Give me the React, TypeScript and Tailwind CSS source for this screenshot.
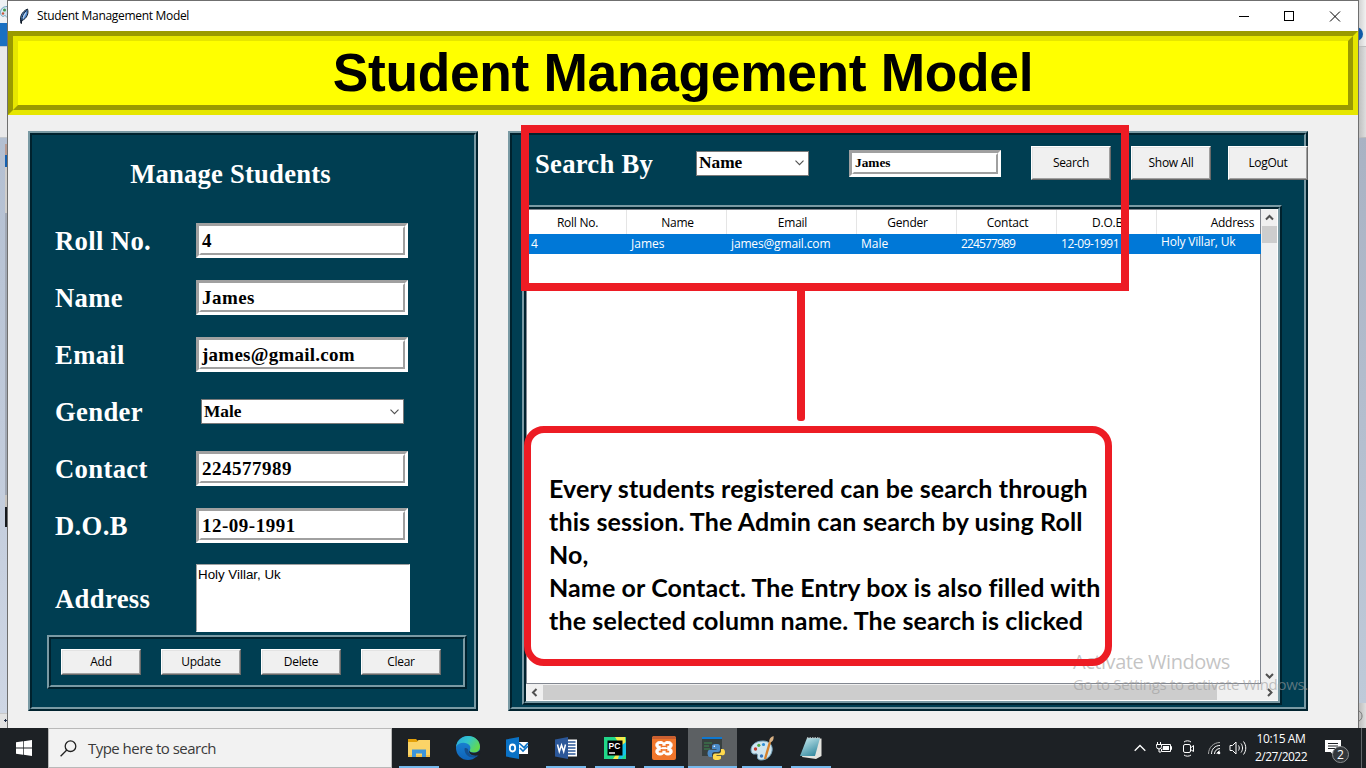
import type { ReactNode } from "react";

const UI = "font-['Open_Sans','Noto_Sans',sans-serif]";
const SERIF = "font-['Liberation_Serif',serif] font-bold";

function Groove({ className, children, inner }: { className: string; inner?: string; children: ReactNode }) {
  return (
    <div className={`shrink-0 border-2 border-t-[#7a9aa4] border-l-[#7a9aa4] border-r-[#00222e] border-b-[#00222e] bg-[#003e52] ${className}`}>
      <div className={`h-full border-2 border-t-[#00222e] border-l-[#00222e] border-r-[#7a9aa4] border-b-[#7a9aa4] ${inner ?? ""}`}>{children}</div>
    </div>
  );
}

function Entry({ className, children }: { className: string; children: ReactNode }) {
  return (
    <div className={`shrink-0 border-3 border-t-[#a0a0a0] border-l-[#a0a0a0] border-r-white border-b-white bg-white ${className}`}>
      <div className="flex h-full items-center border-2 border-t-white border-l-white border-r-[#a0a0a0] border-b-[#a0a0a0] pl-[1px] whitespace-nowrap">{children}</div>
    </div>
  );
}

function Combo({ className, children }: { className: string; children: ReactNode }) {
  return (
    <div className={`flex h-[25px] shrink-0 items-center justify-between border border-[#7a7a7a] bg-white pr-[4px] pl-[2px] text-[17.33px] leading-none text-black ${SERIF} ${className}`}>
      <span>{children}</span>
      <svg width="9" height="6" viewBox="0 0 9 6" fill="none" stroke="#505050" strokeWidth="1.1"><path d="M.5 .7 4.5 4.7 8.5 .7" /></svg>
    </div>
  );
}

function Btn({ className, children }: { className: string; children: ReactNode }) {
  return (
    <button className={`flex w-20 shrink-0 items-center justify-center border border-t-white border-l-white border-r-[#696969] border-b-[#696969] p-0 text-xs tracking-[-0.3px] text-black ${UI} ${className}`}>
      <span className="flex h-full w-full items-center justify-center border border-t-[#e3e3e3] border-l-[#e3e3e3] border-r-[#a0a0a0] border-b-[#a0a0a0] bg-[#f0f0f0]">{children}</span>
    </button>
  );
}

function FormRow({ label, className, children }: { label: string; className?: string; children: ReactNode }) {
  return (
    <div className={`flex items-center ${className ?? "h-[35px]"}`}>
      <span className={`w-[141px] shrink-0 pt-[2px] text-[26.67px] leading-none tracking-[0.35px] whitespace-nowrap text-white ${SERIF}`}>{label}</span>
      {children}
    </div>
  );
}

const entryText = `text-[19px] leading-none text-black ${SERIF}`;

function ManagePanel() {
  return (
    <Groove className="h-[580px] w-[450px]">
      <h2 className={`flex h-[88px] items-center justify-center pr-[45px] pb-[11px] text-[26.67px] tracking-[0.2px] text-white ${SERIF}`}>Manage Students</h2>
      <div className="flex flex-col gap-[22px] pl-[23px]">
        <FormRow label="Roll No."><Entry className={`h-[35px] w-[212px] ${entryText}`}>4</Entry></FormRow>
        <FormRow label="Name"><Entry className={`h-[35px] w-[212px] tracking-[0.45px] ${entryText}`}>James</Entry></FormRow>
        <FormRow label="Email"><Entry className={`h-[35px] w-[212px] tracking-[0.25px] ${entryText}`}>james@gmail.com</Entry></FormRow>
        <FormRow label="Gender"><Combo className="ml-[5px] w-[203px]">Male</Combo></FormRow>
        <FormRow label="Contact"><Entry className={`h-[35px] w-[212px] tracking-[0.5px] ${entryText}`}>224577989</Entry></FormRow>
        <FormRow label="D.O.B"><Entry className={`h-[35px] w-[212px] tracking-[0.5px] ${entryText}`}>12-09-1991</Entry></FormRow>
        <FormRow label="Address" className="-mt-px h-[68px]">
          <div className="h-[68px] w-[214px] border border-t-[#a0a0a0] border-l-[#a0a0a0] border-r-white border-b-white bg-white pt-[2px] pl-px font-['Liberation_Sans',sans-serif] text-[13.33px] leading-[16px] text-black">Holy Villar, Uk</div>
        </FormRow>
      </div>
      <Groove className="mt-[3px] ml-[15px] h-[54px] w-[420px]" inner="flex gap-5 pl-[10px] pt-[10px]">
        <Btn className="h-[26px]">Add</Btn>
        <Btn className="h-[26px]">Update</Btn>
        <Btn className="h-[26px]">Delete</Btn>
        <Btn className="h-[26px]">Clear</Btn>
      </Groove>
    </Groove>
  );
}

const columns = [
  { head: "Roll No.", cell: "4", w: "w-[100px]", t: "" },
  { head: "Name", cell: "James", w: "w-[100px]", t: "" },
  { head: "Email", cell: "james@gmail.com", w: "w-[130px]", t: "tracking-[-0.15px]" },
  { head: "Gender", cell: "Male", w: "w-[100px]", t: "" },
  { head: "Contact", cell: "224577989", w: "w-[100px]", t: "tracking-[-0.85px]" },
  { head: "D.O.B", cell: "12-09-1991", w: "w-[100px]", t: "tracking-[-0.45px]" },
  { head: "Address", cell: "Holy Villar, Uk", w: "w-[150px]", t: "tracking-[-0.2px] -translate-y-[2px]" },
];

function Arrow({ d }: { d: string }) {
  return <svg width="9" height="9" viewBox="0 0 9 9" fill="none" stroke="#505050" strokeWidth="2"><path d={d} /></svg>;
}

function StudentTable() {
  return (
    <Groove className="ml-[10px] h-[500px] w-[760px]" inner="flex flex-col bg-[#f0f0f0]">
      <div className="flex h-[475px]">
        <div className="h-[475px] w-[735px] shrink-0 border border-[#828790] bg-white">
          <div className="flex h-6 overflow-hidden">
            {columns.map((c) => (
              <div key={c.head} className={`flex shrink-0 items-center justify-center border-r border-[#e5e5e5] pt-px pl-[2px] text-xs tracking-[-0.25px] text-black ${UI} ${c.w}`}>{c.head}</div>
            ))}
          </div>
          <div className="mr-[-1px] flex h-5 overflow-hidden bg-[#0078d7]">
            {columns.map((c) => (
              <div key={c.head} className={`flex shrink-0 items-center pl-[4px] text-xs whitespace-nowrap text-white ${UI} ${c.w} ${c.t}`}>{c.cell}</div>
            ))}
          </div>
        </div>
        <div className="ml-px flex w-4 flex-col items-center justify-between border-r border-white bg-[#f0f0f0]">
          <div className="flex w-full flex-col items-center">
            <div className="flex h-[17px] items-center"><Arrow d="M1 6.5 4.5 3 8 6.5" /></div>
            <div className="h-[17px] w-full bg-[#cdcdcd]" />
          </div>
          <div className="flex h-[17px] items-center"><Arrow d="M1 3 4.5 6.5 8 3" /></div>
        </div>
      </div>
      <div className="mt-px flex h-4 items-center border-b border-white bg-[#f0f0f0]">
        <div className="flex w-[17px] justify-center"><Arrow d="M6.5 1 3 4.5 6.5 8" /></div>
        <div className="h-full w-[675px] bg-[#cdcdcd]" />
        <div className="ml-[44px] flex w-[17px] justify-center"><Arrow d="M3 1 6.5 4.5 3 8" /></div>
      </div>
    </Groove>
  );
}

function SearchPanel() {
  return (
    <Groove className="h-[580px] w-[800px]">
      <div className="mb-[14px] flex h-14 items-center pl-[23px]">
        <span className={`w-[161px] shrink-0 pt-[2px] text-[26.67px] leading-none tracking-[0.25px] text-white ${SERIF}`}>Search By</span>
        <Combo className="w-[113px]">Name</Combo>
        <Entry className={`ml-10 h-[27px] w-[152px] text-[13.33px] leading-none text-black ${SERIF}`}>James</Entry>
        <Btn className="ml-[30px] h-[34px]">Search</Btn>
        <Btn className="ml-5 h-[34px]">Show All</Btn>
        <Btn className="ml-[17px] h-[34px]">LogOut</Btn>
      </div>
      <StudentTable />
    </Groove>
  );
}

function TitleBar() {
  return (
    <header className="flex h-[31px] items-center border-t border-[#6f6f6f] bg-white">
      <svg className="ml-[10px]" width="12" height="17" viewBox="0 0 12 17">
        <path d="M3 15C1.500 10 3 4 9.500 1c1.500 4-.5 9.500-5.500 11.500z" fill="#4d86cc" stroke="#15202e" strokeWidth="1" />
        <path d="M8.500 2.500C5 6 4 9 3.200 16" fill="none" stroke="#0b1420" strokeWidth="1" />
        <path d="M8 4.500C6 6.500 5.600 8 5 10.500" fill="none" stroke="#b7d4f2" strokeWidth="1.200" />
      </svg>
      <span className={`ml-[7px] text-xs tracking-[-0.31px] whitespace-nowrap text-black ${UI}`}>Student Management Model</span>
      <svg className="ml-auto mr-[17px]" width="102" height="11" viewBox="0 0 102 11" fill="none" stroke="#000" shapeRendering="crispEdges">
        <path d="M0 5.500h10M45.500 .5h9v9h-9z" />
        <path d="M91 .5l10 10M101 .5l-10 10" shapeRendering="auto" />
      </svg>
    </header>
  );
}

function Banner() {
  return (
    <div className="h-[84px] border-5 border-t-[#9a9a00] border-l-[#9a9a00] border-r-[#e6e600] border-b-[#e6e600]">
      <h1 className="flex h-full items-center justify-center border-5 border-t-[#e6e600] border-l-[#e6e600] border-r-[#9a9a00] border-b-[#9a9a00] bg-[#ffff00] font-['Liberation_Sans',sans-serif] text-[53.33px] leading-none font-bold tracking-[-0.32px] text-black">Student Management Model</h1>
    </div>
  );
}

function LeftEdge() {
  return (
    <div className="flex w-[7px] shrink-0 flex-col overflow-hidden">
      <div className="flex h-[23px] items-center bg-[#eef1f4]">
        <svg width="7" height="14" viewBox="0 0 7 14"><path d="M7 1.500C3 1.500.5 4 .5 7.500S3 12 4 11s2 0 3 1.500" fill="#d5e6ee" stroke="#6ba3bd" /><circle cx="4.500" cy="5" r="1.500" fill="#3f9a4b" /><circle cx="3" cy="8.500" r="1.200" fill="#c9543c" /></svg>
      </div>
      <div className="h-[23px] bg-[#1a70c2]" />
      <div className="h-[92px] border-t border-b border-[#c4c8cc] bg-[#e9e9ea]" />
      <div className="flex h-[575px] flex-col items-end bg-linear-to-b from-[#b3bfd1] to-[#ced6e4]">
        <div className="mt-[6px] h-[11px] w-[2px] bg-[#b89a90]" />
        <div className="h-[12px] w-[2px] bg-[#1460b0]" />
        <div className="h-[46px] w-[2px] bg-[#cfcdca]" />
        <div className="h-[282px] w-[2px] bg-[#a2a9b5]" />
        <div className="h-[12px] w-[2px] bg-[#c9c5c0]" />
        <div className="h-[20px] w-[2px] bg-[#16191d]" />
      </div>
      <div className="flex flex-1 items-center border-t border-[#c8c8c8] bg-[#e2e2e2] pb-[2px]">
        <svg width="7" height="5" viewBox="0 0 7 5" stroke="#1d2b45" fill="none"><path d="M4 2.500h3M5.500 1v3" /></svg>
      </div>
    </div>
  );
}

function RightEdge() {
  return (
    <div className="flex w-[7px] shrink-0 flex-col overflow-hidden">
      <div className="h-[46px] bg-linear-to-r from-[#d2d2d2] to-[#f1f1f1] pt-[27px]">
        <div className="-ml-[10px] h-[14px] w-[14px] rounded-full bg-[#0f5ba8]" />
      </div>
      <div className="h-[92px] border-t border-b border-[#bdbdbd] bg-linear-to-r from-[#c0c0c0] to-[#dedede]" />
      <div className="h-[565px] bg-linear-to-b from-[#a9b2c3] to-[#bfcad9]" />
      <div className="flex flex-1 items-center bg-linear-to-r from-[#bdbdbd] to-[#dedede]">
        <svg width="7" height="14" viewBox="0 0 7 14" fill="none" stroke="#777"><path d="M0 2c4 2 4 8 0 10" /></svg>
      </div>
    </div>
  );
}

const FileExplorer = () => (
  <svg width="24" height="24" viewBox="0 0 24 24"><path d="M1 3h8l2 2v3H1z" fill="#e3a008" /><path d="M1 6h9l1.500-2H23v17H1z" fill="#fbd467" /><path d="M1 19h22v2H1z" fill="#f2c04a" /><path d="M5 13.500h14V21h-4v-3.500H9V21H5z" fill="#3d95da" /></svg>
);
const Edge = () => (
  <svg width="26" height="26" viewBox="0 0 26 26">
    <defs>
      <linearGradient id="eg" x1="0" y1="0" x2="1" y2=".5"><stop offset="0" stopColor="#2ba6dc" /><stop offset=".5" stopColor="#32c5cd" /><stop offset="1" stopColor="#62d94f" /></linearGradient>
      <linearGradient id="eb" x1="0" y1="0" x2="0" y2="1"><stop offset="0" stopColor="#1c8ad8" /><stop offset="1" stopColor="#0f63b8" /></linearGradient>
    </defs>
    <circle cx="13" cy="13" r="12" fill="url(#eb)" />
    <path d="M1 12C2 5 7 1 13 1c7 0 12 5 12 10.500 0 4-3 6-6 6-3.500 0-4.700-1.500-4.200-2.500 1.200-2 .7-5-2.800-6.500C8 7 3 8 1 12z" fill="url(#eg)" />
    <path d="M9.500 14c0 5 4 8.500 9 8.500 2.500 0 4.500-1.300 5-2.500-2 1-4 1.300-6 .7-3-1-4.500-3-4.200-5.700C13 13 9.500 12 9.500 14z" fill="#14508f" />
    <path d="M14.600 15c-.5 1.500 1 2.700 4.400 2.700 2.700 0 4.500-1 5.700-2.500l.8 2.500-2 2.500c-5 1.500-11-1-8.900-5.200z" fill="#1d2125" />
  </svg>
);
const Outlook = () => (
  <svg width="24" height="24" viewBox="0 0 24 24"><path d="M14 6h9v12h-9z" fill="#fff" /><path d="M14 7l5 4.500L23 7M15 12l3 3 5-5" fill="none" stroke="#0a72c6" strokeWidth="1.600" /><path d="M1 3.500 14 1v22L1 20.500z" fill="#0a72c6" /><ellipse cx="7.500" cy="12" rx="2.700" ry="3.500" fill="none" stroke="#fff" strokeWidth="1.800" /></svg>
);
const Word = () => (
  <svg width="24" height="24" viewBox="0 0 24 24"><path d="M13 3.500h10v17H13z" fill="#fff" /><path d="M14 6h7.500M14 9h7.500M14 12h7.500M14 15h7.500M14 18h7.500" stroke="#2b5797" strokeWidth="1.300" /><path d="M1 3.500 14 1v22L1 20.500z" fill="#2b5799" /><path d="m3.500 8.500 1.800 7L7.500 9l2.200 6.500 1.800-7" fill="none" stroke="#fff" strokeWidth="1.500" /></svg>
);
const PyCharm = () => (
  <svg width="24" height="24" viewBox="0 0 24 24"><path d="M1 1h22v22H1z" fill="#21d789" /><path d="M12 1h10l1 10-5 12H10l8-12z" fill="#f3ec4b" /><path d="M19 9l4-3v12l-5 5h-3z" fill="#16c3e6" /><path d="M4.500 4.500h15v15h-15z" fill="#000" /><text x="5.500" y="12.500" fill="#fff" fontSize="8.500" fontWeight="700" fontFamily="Liberation Sans, sans-serif">PC</text><path d="M6 17h6" stroke="#fff" strokeWidth="1.400" /></svg>
);
const Xampp = () => (
  <svg width="26" height="26" viewBox="0 0 26 26">
    <rect x="1" y="1" width="24" height="24" rx="2" fill="#f0762b" />
    <path d="M1 4a3 3 0 0 1 3-3h18a3 3 0 0 1 3 3H1z" fill="#c95f31" />
    <path d="M13 8.300C12 5.800 4.800 5.500 4.800 9.800c0 2 .8 2.700 1.600 3.400-.8.700-1.600 1.500-1.600 3.500 0 4.300 7.200 4 8.200 1.500 1 2.500 8.200 2.800 8.200-1.500 0-2-.8-2.800-1.600-3.500.8-.7 1.600-1.400 1.600-3.400C21.200 5.500 14 5.800 13 8.300z" fill="#fff" stroke="#fff" strokeWidth="1" />
    <path d="M7.800 9.800h2.700v1.800h5v-1.800h2.700M7.800 16.700h2.700v-1.900h5v1.900h2.700" fill="none" stroke="#f0762b" strokeWidth="1.700" />
    <path d="M11 13.200h4" stroke="#fff" strokeWidth="2" />
  </svg>
);
const Python = () => (
  <svg width="26" height="26" viewBox="0 0 26 26"><path d="M2 2h20v19H2z" fill="#38403f" /><path d="M2 2h20v2H2z" fill="#0f78d1" /><path d="M4 8h8M4 11h5M4 14h6" stroke="#3c8a50" strokeWidth="1.200" /><path d="M16 9c-3.500 0-4 1-4 2.500V14h4.500v.8H10c-2 0-2.500 2-2.500 3.700S8.500 22 10 22h2v-2.500c0-1.500 1-2.500 2.500-2.500H18c1.300 0 2-1 2-2v-3.500C20 9.500 19 9 16 9z" fill="#4b8bc8" /><path d="M17 25c3.500 0 4-1 4-2.500V21h-4.500v-.8H23c1.500 0 2-1.500 2-3s-.8-3.200-2-3.200h-2v2c0 1.500-1 2.500-2.500 2.500H15c-1.300 0-2 1-2 2v2.500c0 1.500 1 2 4 2z" fill="#ffd94c" /><circle cx="14.300" cy="11.300" r=".8" fill="#fff" /></svg>
);
const Paint = () => (
  <svg width="26" height="26" viewBox="0 0 26 26"><path d="M14 6C6 6 2 10.500 2 15c0 3 2 4.500 4 4s3 .5 2.500 2.500C8 24 10 25 12 25c6 0 10-4 11-9S21 6 14 6z" fill="#cfe5f0" stroke="#76a4bd" /><circle cx="6.500" cy="14" r="1.700" fill="#c0392b" /><circle cx="9.800" cy="10.300" r="1.600" fill="#4dab46" /><circle cx="14.500" cy="9.500" r="1.600" fill="#2f8fd6" /><circle cx="12.500" cy="21" r="1.700" fill="#3575c1" /><path d="M16 24 21 7" stroke="#d5822d" strokeWidth="2.400" /><path d="M20.500 7.500c-1-3 1-5.500 4-6.500.5 3-.5 6-4 6.500z" fill="#d9b184" /></svg>
);
const Notepad = () => (
  <svg width="24" height="24" viewBox="0 0 24 24"><defs><linearGradient id="np" x1="0" y1="0" x2=".6" y2="1"><stop offset="0" stopColor="#cfeff3" /><stop offset="1" stopColor="#3b8ea3" /></linearGradient></defs><path d="M9 3 22.500 2.500V20L17 23 3 21z" fill="#e4e4df" /><path d="M8 2h13l-5 18H1z" fill="url(#np)" /><path d="M8 2h13" stroke="#b9c7ca" strokeWidth="1.500" strokeDasharray="1.500 1" /></svg>
);

const apps = [
  { Icon: FileExplorer, name: "files", open: true, active: false },
  { Icon: Edge, name: "edge", open: false, active: false },
  { Icon: Outlook, name: "outlook", open: false, active: false },
  { Icon: Word, name: "word", open: true, active: false },
  { Icon: PyCharm, name: "pycharm", open: true, active: false },
  { Icon: Xampp, name: "xampp", open: true, active: false },
  { Icon: Python, name: "python", open: true, active: true },
  { Icon: Paint, name: "paint", open: true, active: false },
  { Icon: Notepad, name: "notepad", open: true, active: false },
];

function Taskbar() {
  return (
    <footer className={`flex h-10 bg-[#1d2125] text-white ${UI}`}>
      <div className="flex w-12 items-center justify-center">
        <svg width="16" height="16" viewBox="0 0 16 16" fill="#fff"><path d="M0 2.300 7 1.300V7.600H0zM7.700 1.200 16 0v7.600H7.700zM0 8.400h7v6.300L0 13.700zM7.700 8.400H16V16l-8.300-1.200z" /></svg>
      </div>
      <div className="flex w-[344px] items-center border border-[#b9b9b9] bg-[#f2f2f2]">
        <svg className="ml-[11px]" width="17" height="17" viewBox="0 0 17 17" fill="none" stroke="#222" strokeWidth="1.300"><circle cx="10.500" cy="6.200" r="5.300" /><path d="M6.800 10 .6 16.300" /></svg>
        <span className="ml-[11px] text-[15px] leading-none tracking-[-0.53px] text-[#3a3a3a]">Type here to search</span>
      </div>
      <div className="ml-[2px] flex">
        {apps.map(({ Icon, name, open, active }) => (
          <div key={name} className={`flex w-[49px] flex-col items-center ${active ? "bg-[#5c6063]" : ""}`}>
            <div className="flex h-[38px] items-center justify-center pt-[2px]"><Icon /></div>
            {open && <div className={`h-[2px] bg-[#76b9ed] ${active ? "w-full" : "w-10"}`} />}
          </div>
        ))}
      </div>
      <div className="ml-auto flex items-center">
        <svg width="12" height="8" viewBox="0 0 12 8" fill="none" stroke="#fff" strokeWidth="1.300"><path d="M.7 6.800 6 1.500l5.300 5.300" /></svg>
        <svg className="ml-[10px]" width="16" height="14" viewBox="0 0 16 14" fill="none" stroke="#fff"><path d="M5.500 3.500h9v7h-9V8M14.500 5.500h1v3h-1" /><path d="M7 5h6v4H6.500z" fill="#fff" stroke="none" /><path d="M1.500 1v2.500M4.500 1v2.500M.5 3.500h5v2a2 2 0 0 1-5 0zM3 7.500V11h2" /></svg>
        <svg className="ml-[10px]" width="13" height="17" viewBox="0 0 13 17" fill="none" stroke="#fff"><rect x="1.500" y="4.500" width="7" height="8" rx="1.500" /><path d="M8.500 8l3-2.500v6L8.500 9.500M2 2c2-1.600 5-1.600 7 0M2 15c2 1.600 5 1.600 7 0" /></svg>
        <svg className="ml-[12px]" width="14" height="14" viewBox="0 0 14 14" fill="none" stroke="#fff"><path d="M1.500 13C1.500 6.500 6.500 1.500 13 1.500" stroke="#aaa" /><path d="M4.500 13C4.500 8 8 4.500 13 4.500M7.500 13c0-3 2.500-5.500 5.500-5.500" /><path d="M10 13c0-1.500 1.500-3 3-3" /><circle cx="12" cy="12" r="1.300" fill="#fff" stroke="none" /></svg>
        <svg className="ml-[8px]" width="18" height="16" viewBox="0 0 18 16" fill="none" stroke="#fff"><path d="M1 5.500h2.500L7 2v12l-3.500-3.500H1zM9.500 5.500c1 1.500 1 3.500 0 5M12 3.500c2 2.500 2 6.500 0 9M14.500 1.500c3 4 3 9 0 13" /></svg>
        <div className="ml-[6px] flex w-[56px] flex-col items-center text-xs leading-[18px] whitespace-nowrap">
          <span className="tracking-[-0.39px]">10:15 AM</span>
          <span className="tracking-[-0.54px]">2/27/2022</span>
        </div>
        <div className="relative ml-[16px] h-[16px] w-[36px]">
          <svg width="17" height="17" viewBox="0 0 17 17"><path d="M0 0h16v12h-6.500V16L5.500 12H0z" fill="#fff" /><path d="M3 3.500h10M3 6h10M3 8.500h7" stroke="#1d2125" /></svg>
          <span className="absolute top-[6px] left-[7px] flex h-[17px] w-[17px] items-center justify-center rounded-full border border-[#8b8e90] bg-[#33373b] text-[12px] leading-none">2</span>
        </div>
        <div className="mr-[4px] h-10 w-px bg-[#62666a]" />
      </div>
    </footer>
  );
}

function Annotations() {
  return (
    <>
      <div className={`absolute top-[650px] left-[1073px] whitespace-nowrap text-[#9c9c9c]/60 ${UI}`}>
        <div className="text-[20px] leading-6 tracking-[-0.45px]">Activate Windows</div>
        <div className="text-[15px] leading-[20px] tracking-[-0.31px]">Go to Settings to activate Windows.</div>
      </div>
      <div className="absolute top-[125px] left-[521px] h-[166px] w-[608px] border-8 border-[#ed1c24]" />
      <div className="absolute top-[290px] left-[797px] h-[131px] w-2 rounded-b-[3px] bg-[#ed1c24]" />
      <div className="absolute top-[426px] left-[524px] h-[240px] w-[588px] rounded-[20px] border-7 border-[#ed1c24] pt-[39px] pl-[18px] font-['Lato',sans-serif] text-[25px] leading-[33px] font-bold tracking-[0.12px] whitespace-nowrap text-black">
        <p>Every students registered can be search through</p>
        <p>this session. The Admin can search by using Roll</p>
        <p>No,</p>
        <p>Name or Contact. The Entry box is also filled with</p>
        <p>the selected column name. The search is clicked</p>
      </div>
    </>
  );
}

export default function App() {
  return (
    <div className="relative flex h-[768px] w-[1366px] flex-col overflow-hidden">
      <div className="flex h-[728px]">
        <LeftEdge />
        <main className="w-[1352px] shrink-0 border-x border-[#6f6f6f] bg-[#f0f0f0]">
          <TitleBar />
          <Banner />
          <div className="flex gap-[30px] pt-4 pl-5">
            <ManagePanel />
            <SearchPanel />
          </div>
        </main>
        <RightEdge />
      </div>
      <Taskbar />
      <Annotations />
    </div>
  );
}
